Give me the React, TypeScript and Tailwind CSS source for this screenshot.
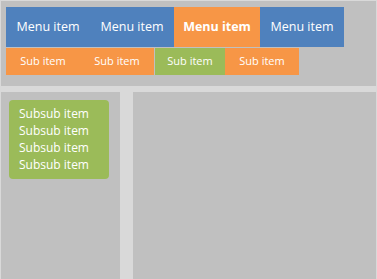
const menu = ["Menu item", "Menu item", "Menu item", "Menu item"];
const subs = ["Sub item", "Sub item", "Sub item", "Sub item"];

export default function App() {
  return (
    <div
      className="h-[279px] w-[377px] overflow-hidden bg-[#d9d9d9] flex flex-col"
      style={{ fontFamily: '"Open Sans", sans-serif' }}
    >
      <div className="ml-px mt-px mr-px h-[85px] bg-[#c0c0c0] pl-[5px] pt-[6px]">
        <div className="flex">
          {menu.map((m, i) => (
            <div
              key={i}
              className={
                i === 2
                  ? "h-10 w-[86px] justify-center flex items-center bg-[#f79646] text-white text-[12.5px] font-bold"
                  : "h-10 w-[84px] justify-center flex items-center bg-[#4f81bd] text-white text-[12.5px]"
              }
            >
              {m}
            </div>
          ))}
        </div>
        <div className="flex mt-px">
          {subs.map((s, i) => (
            <div
              key={i}
              className={
                i === 2
                  ? "ml-px h-[27px] w-[70px] justify-center flex items-center bg-[#9bbb59] text-white text-[11px]"
                  : "h-[27px] w-[74px] justify-center flex items-center bg-[#f79646] text-white text-[11px]"
              }
            >
              {s}
            </div>
          ))}
        </div>
      </div>

      <div className="flex flex-1 mt-[6px]">
        <div className="ml-px w-[119px] bg-[#c0c0c0] p-2">
          <div className="w-[100px] h-[79px] rounded-sm bg-[#9bbb59] pl-[10px] pt-[5px] text-white text-[12px] leading-[17px]">
            <div>Subsub item</div>
            <div>Subsub item</div>
            <div>Subsub item</div>
            <div>Subsub item</div>
          </div>
        </div>
        <div className="ml-[13px] mr-px flex-1 bg-[#c0c0c0]" />
      </div>
    </div>
  );
}
